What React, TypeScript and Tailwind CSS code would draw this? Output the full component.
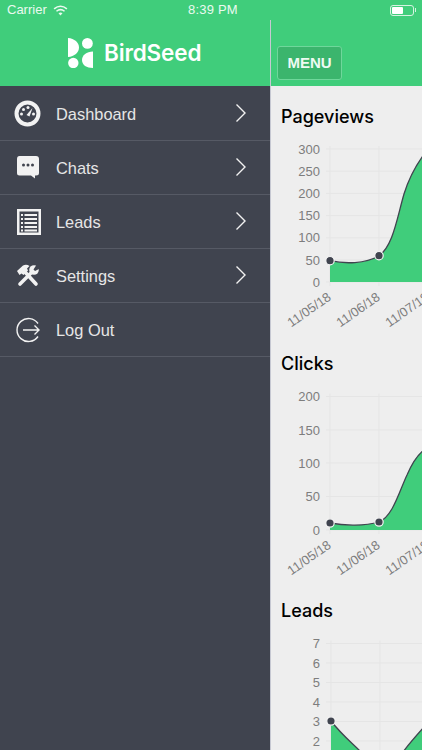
const DashboardIcon = () => (
  <svg viewBox="0 0 28 28" className="w-7 h-7">
    <circle cx="13.5" cy="13.5" r="11" fill="none" stroke="#f2f2f2" strokeWidth="4" />
    <circle cx="7.5" cy="14" r="1.5" fill="#f2f2f2" />
    <circle cx="9.5" cy="9.5" r="1.5" fill="#f2f2f2" />
    <circle cx="14" cy="7.5" r="1.5" fill="#f2f2f2" />
    <circle cx="19.5" cy="14" r="1.5" fill="#f2f2f2" />
    <path d="M12.5 15 L18.5 8 L15.5 16.5 Z" fill="#f2f2f2" />
  </svg>
);

const ChatIcon = () => (
  <svg viewBox="0 0 28 28" className="w-7 h-7">
    <path
      d="M5.5 2 H22 Q25 2 25 5 V19 Q25 21.5 22 21.5 H21 V24.5 L17 21.5 H5.5 Q3 21.5 3 19 V5 Q3 2 5.5 2 Z"
      fill="#f2f2f2"
    />
    <circle cx="9.5" cy="11" r="1.5" fill="#40444f" />
    <circle cx="14" cy="11" r="1.5" fill="#40444f" />
    <circle cx="18.5" cy="11" r="1.5" fill="#40444f" />
  </svg>
);

const LeadsIcon = () => (
  <svg viewBox="0 0 28 28" className="w-7 h-7">
    <rect x="3" y="1" width="24" height="26" fill="#f2f2f2" />
    <rect x="5.5" y="3.5" width="19" height="21" fill="#40444f" />
    {[6, 10, 14, 18, 21.5].map((y) => (
      <g key={y}>
        <rect x="7" y={y} width="2" height="2" fill="#f2f2f2" />
        <rect x="10.5" y={y} width="12.5" height="2" fill="#f2f2f2" />
      </g>
    ))}
  </svg>
);

const ToolsIcon = () => (
  <svg viewBox="0 0 28 28" className="w-7 h-7">
    <path d="M3 9 L9 3.5 Q12.5 2 15.5 4 L13 6.5 L14 8.5 L9.5 13 L7.5 11.5 L5.5 13 Z" fill="#f2f2f2" />
    <line x1="11" y1="10" x2="22" y2="22" stroke="#f2f2f2" strokeWidth="3.6" strokeLinecap="round" />
    <line x1="19" y1="9" x2="6" y2="22" stroke="#f2f2f2" strokeWidth="3.6" strokeLinecap="round" />
    <circle cx="20" cy="8" r="4.8" fill="#f2f2f2" />
    <path d="M19.5 7.5 L23 2 L27 6 L21 9 Z" fill="#40444f" />
  </svg>
);

const LogoutIcon = () => (
  <svg viewBox="0 0 28 28" className="w-7 h-7" fill="none" stroke="#f2f2f2" strokeWidth="1.4">
    <path d="M24 7.5 A11.5 11.5 0 1 0 24 20.5" />
    <path d="M9 14 H25 M20.5 9.5 L25 14 L20.5 18.5" />
  </svg>
);

const Chevron = () => (
  <svg viewBox="0 0 12 20" className="w-3 h-5" fill="none" stroke="#f2f2f2" strokeWidth="1.4">
    <path d="M1.5 1.5 L10 10 L1.5 18.5" />
  </svg>
);

const menuItems = [
  { label: "Dashboard", icon: <DashboardIcon />, arrow: true },
  { label: "Chats", icon: <ChatIcon />, arrow: true },
  { label: "Leads", icon: <LeadsIcon />, arrow: true },
  { label: "Settings", icon: <ToolsIcon />, arrow: true },
  { label: "Log Out", icon: <LogoutIcon />, arrow: false },
];

const dates = ["11/05/18", "11/06/18", "11/07/18"];

type ChartProps = {
  title: string;
  ticks: { label: string; y: number }[];
  xs: number[];
  baseline: number;
  area: string;
  line: string;
  points: number[][];
};

// coordinates are relative to the pane: x from the pane's left edge, y from the svg's top
const Chart = ({ title, ticks, xs, baseline, area, line, points }: ChartProps) => (
  <section className="h-[247px] shrink-0">
    <h2 className="pt-[19px] pb-[11px] pl-[10px] font-['Inter',sans-serif] text-[18px] leading-6 font-medium text-black">
      {title}
    </h2>
    <svg width="151" height="193" viewBox="0 0 151 193" className="block overflow-hidden">
      {ticks.map((t) => (
        <g key={t.label}>
          <line x1="55" x2="151" y1={t.y} y2={t.y} stroke="#e5e5e5" />
          <text x="49" y={t.y + 4.5} textAnchor="end" className="fill-[#7d7d7d] text-[13px]">
            {t.label}
          </text>
        </g>
      ))}
      {xs.map((x) => (
        <line key={x} x1={x} x2={x} y1={ticks[0].y - 3} y2={baseline + 4} stroke="#e5e5e5" />
      ))}
      <path d={area} fill="#40cd7b" />
      <path d={line} fill="none" stroke="#40444f" strokeWidth="1.3" />
      {points.map(([x, y]) => (
        <circle key={x} cx={x} cy={y} r="4.2" fill="#40444f" stroke="#f4f4f4" strokeWidth="1.2" />
      ))}
      {baseline < 170 &&
        xs.map((x, i) => (
          <text
            key={x}
            x={x + 2}
            y={baseline + 17}
            textAnchor="end"
            transform={`rotate(-35 ${x + 2} ${baseline + 17})`}
            className="fill-[#7d7d7d] text-[13px]"
          >
            {dates[i]}
          </text>
        ))}
    </svg>
  </section>
);

export default function App() {
  return (
    <div className="w-[422px] h-[750px] overflow-hidden flex flex-col font-['Liberation_Sans',sans-serif]">
      <div className="h-5 shrink-0 bg-[#40cd7b] flex items-center justify-between pl-[7px] pr-[6px] text-[13px] text-[#eafaf0]">
        <div className="w-[100px] flex items-center gap-[6px]">
          <span>Carrier</span>
          <svg viewBox="0 0 16 12" className="w-[15px] h-[11px]" fill="none" stroke="#eafaf0" strokeWidth="1.7">
            <path d="M1 4.2 Q8 -1.6 15 4.2" />
            <path d="M3.6 6.8 Q8 3.2 12.4 6.8" />
            <path d="M8 11.5 L5.8 9 Q8 7.4 10.2 9 Z" fill="#eafaf0" stroke="none" />
          </svg>
        </div>
        <span className="ml-[3px] tracking-[0.2px]">8:39 PM</span>
        <div className="w-[100px] flex justify-end items-center">
          <div className="w-[24px] h-[11px] rounded-[3px] border border-[#d5f3e1] p-[1px]">
            <div className="w-[11px] h-full rounded-[1px] bg-white" />
          </div>
          <div className="w-[1px] h-1 bg-[#d5f3e1] ml-[1px]" />
        </div>
      </div>

      <div className="flex flex-1 min-h-0">
        <aside className="w-[271px] shrink-0 flex flex-col bg-[#40444f] border-r border-[#c6c8d2]">
          <div className="h-[66px] shrink-0 bg-[#40cd7b] flex items-center pl-[68px] gap-[11px]">
            <svg viewBox="0 0 25 30" className="w-[25px] h-[30px]">
              <path d="M0 0 C6.5 0.5 11 4.5 11 9.5 C11 14.5 6.5 18.5 0 19 Z" fill="#ffffff" />
              <circle cx="19.4" cy="5.4" r="5.4" fill="#ffffff" />
              <circle cx="5.3" cy="25" r="5.2" fill="#ffffff" />
              <path d="M25 13.5 C18.5 14 14 17 14 22 C14 27 18.5 30 25 30 Z" fill="#ffffff" />
            </svg>
            <span className="font-['Inter',sans-serif] text-[22.5px] font-semibold tracking-[-0.15px] text-white">
              BirdSeed
            </span>
          </div>
          <nav className="flex flex-col pt-[1px]">
            {menuItems.map((item) => (
              <div key={item.label} className="h-[54px] flex items-center pl-[14px] pr-[23px] border-b border-[#565a65]">
                <div className="w-7 h-7 flex items-center">{item.icon}</div>
                <span className="ml-[14px] mt-[2px] text-[16.4px] text-[#e6e6e6]">{item.label}</span>
                {item.arrow && (
                  <div className="ml-auto mb-[2px]">
                    <Chevron />
                  </div>
                )}
              </div>
            ))}
          </nav>
        </aside>

        <main className="flex-1 min-w-0 flex flex-col bg-[#eeeeee] overflow-hidden">
          <div className="h-[66px] shrink-0 bg-[#40cd7b] flex items-end pl-[6px] pb-[6px]">
            <button className="w-[65px] h-[34px] rounded-[3px] bg-[#3bb56d] border border-[#6fd79b] text-[15px] font-bold text-[#eefaf3]">
              MENU
            </button>
          </div>
          <Chart
            title="Pageviews"
            ticks={[
              { label: "300", y: 9 },
              { label: "250", y: 31.2 },
              { label: "200", y: 53.4 },
              { label: "150", y: 75.6 },
              { label: "100", y: 97.8 },
              { label: "50", y: 120 },
              { label: "0", y: 142 },
            ]}
            xs={[59, 108, 157]}
            baseline={142}
            area="M59 120.7 C74 124 94 124 108 115.7 C122 106 126 78 133 54 C138 38 145 25 154 13 V142 H59 Z"
            line="M59 120.7 C74 124 94 124 108 115.7 C122 106 126 78 133 54 C138 38 145 25 154 13"
            points={[
              [59, 120.7],
              [108, 115.7],
            ]}
          />
          <Chart
            title="Clicks"
            ticks={[
              { label: "200", y: 9.5 },
              { label: "150", y: 43 },
              { label: "100", y: 76 },
              { label: "50", y: 109.5 },
              { label: "0", y: 143 },
            ]}
            xs={[59, 108, 157]}
            baseline={143}
            area="M59 136 C74 139 94 139 108 135 C122 129 128 105 136 88 C141 76 146 68 154 62 V143 H59 Z"
            line="M59 136 C74 139 94 139 108 135 C122 129 128 105 136 88 C141 76 146 68 154 62"
            points={[
              [59, 136],
              [108, 135],
            ]}
          />
          <Chart
            title="Leads"
            ticks={[
              { label: "7", y: 9.5 },
              { label: "6", y: 29 },
              { label: "5", y: 48.5 },
              { label: "4", y: 68 },
              { label: "3", y: 87.5 },
              { label: "2", y: 107 },
              { label: "1", y: 126.5 },
            ]}
            xs={[60, 109, 158]}
            baseline={190}
            area="M60 87 C70 100 80 108 90 118 H132 C138 110 145 102 154 92 V193 H60 Z"
            line="M60 87 C70 100 80 108 90 118 M132 118 C138 110 145 102 154 92"
            points={[[60, 87]]}
          />
        </main>
      </div>
    </div>
  );
}
